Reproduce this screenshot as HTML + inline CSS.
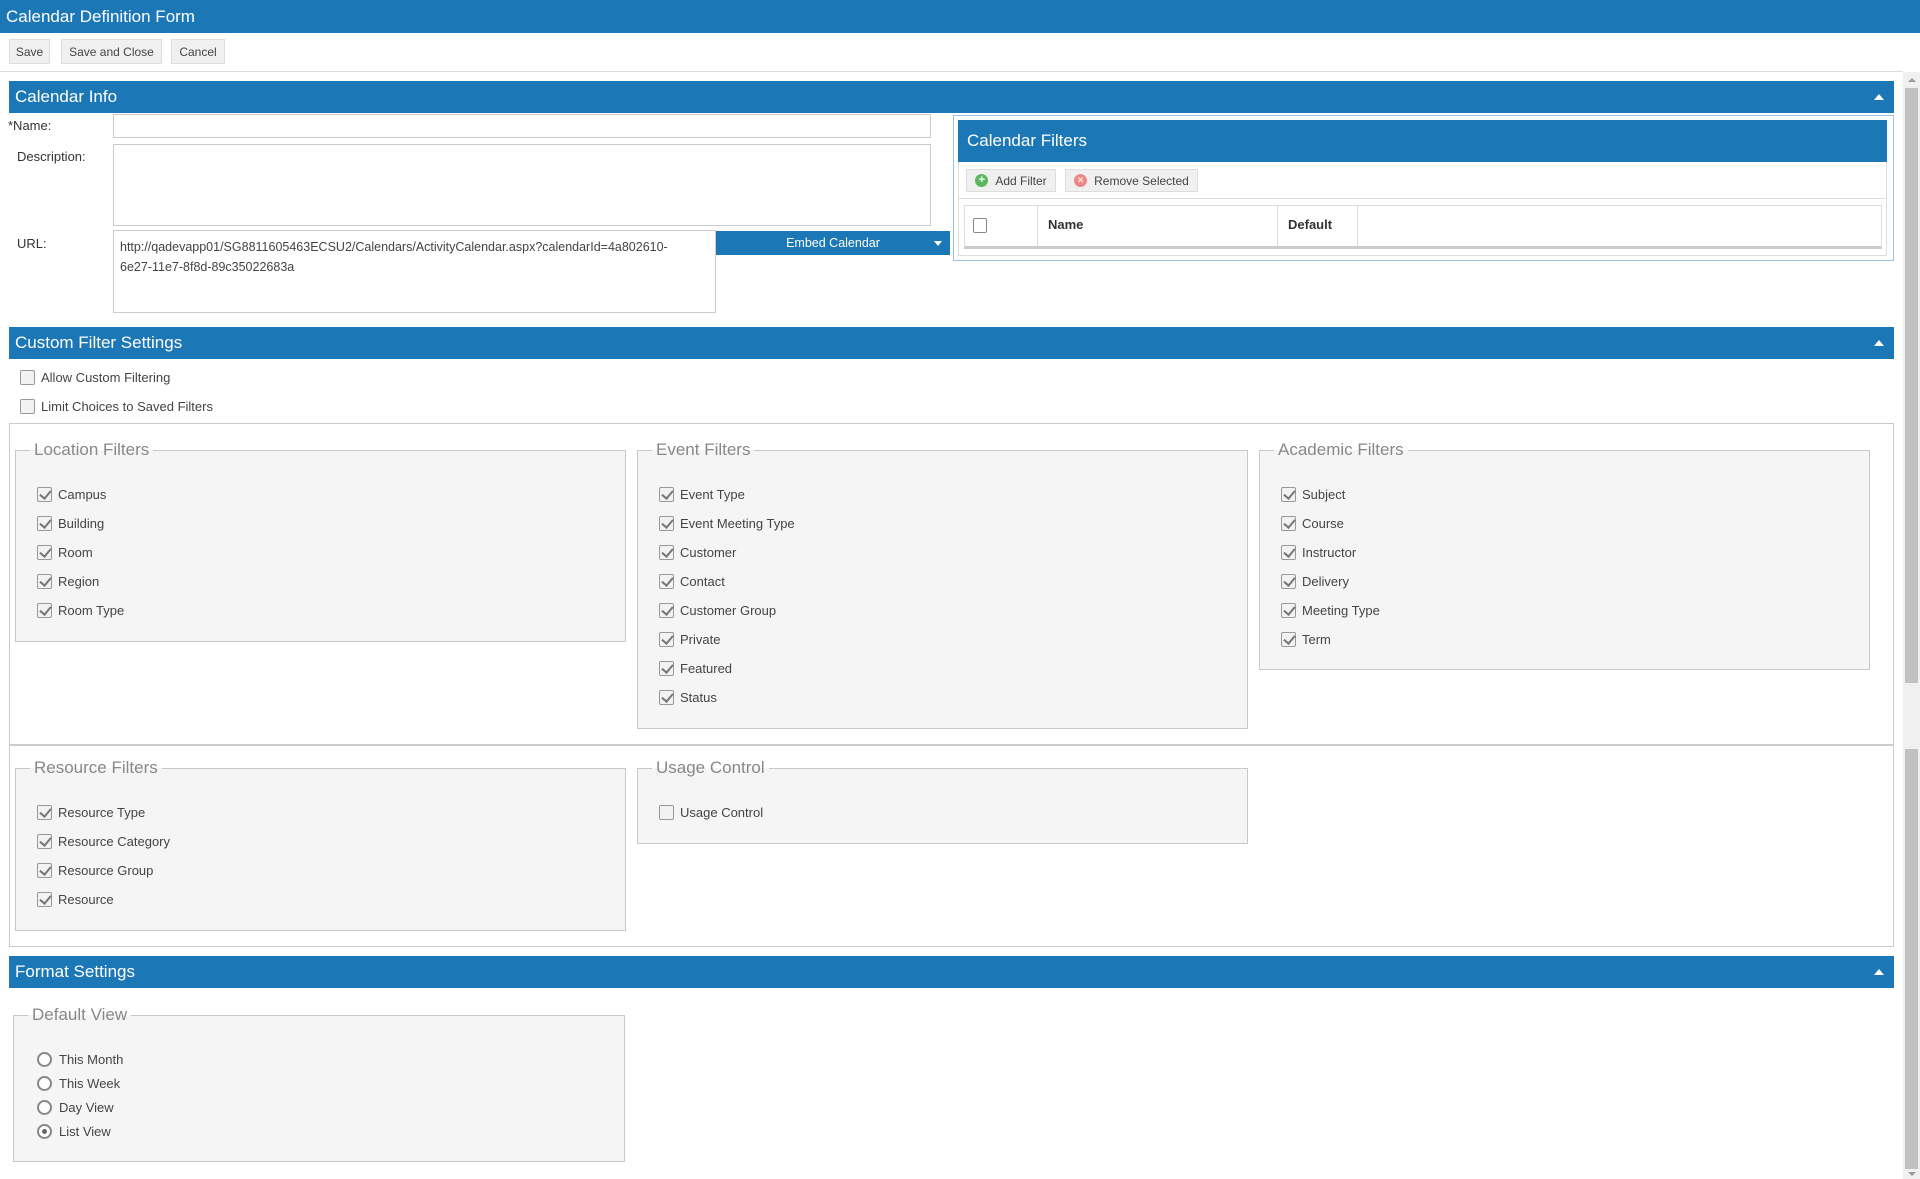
<!DOCTYPE html>
<html><head><meta charset="utf-8"><style>
*{box-sizing:border-box;margin:0;padding:0}
body{width:1920px;height:1179px;overflow:hidden;background:#fff;font-family:"Liberation Sans",sans-serif;font-size:13px;color:#333;position:relative}
.a{position:absolute}
.bar{position:absolute;background:#1c77b7;color:#fff;font-size:17px;padding-left:6px;display:flex;align-items:center}
.tri{position:absolute;right:10px;top:50%;margin-top:-3px;width:0;height:0;border-left:5px solid transparent;border-right:5px solid transparent;border-bottom:6px solid #fff}
.btn{position:absolute;background:#f0f0f0;border:1px solid #ddd;font-size:12px;color:#444;display:flex;align-items:center;justify-content:center}
.inp{position:absolute;border:1px solid #ccc;background:#fff}
.fs{position:absolute;background:#f5f5f5;border:1px solid #c8c8c8}
.lg{position:absolute;top:-12px;left:14px;background:#fff;padding:0 4px;color:#888;font-size:17px;line-height:22px;background:linear-gradient(#fff 50%,#f5f5f5 50%)}
.it{position:absolute;left:21px;height:18px;display:flex;align-items:center;font-size:13px;color:#444}
.cb{width:15px;height:15px;border:1px solid #999;border-radius:2px;background:#f2f2f2;margin-right:6px;position:relative;flex:none}
.cb.k::after{content:"";position:absolute;left:4px;top:0px;width:5px;height:9px;border-right:2.5px solid #777;border-bottom:2.5px solid #777;transform:rotate(40deg)}
.rd{width:15px;height:15px;border:2px solid #888;border-radius:50%;margin-right:7px;position:relative;flex:none;background:#fff}
.rd.k::after{content:"";position:absolute;left:3px;top:3px;width:5px;height:5px;border-radius:50%;background:#666}
</style></head><body>
<div class="bar" style="left:0;top:0;width:1920px;height:33px">Calendar Definition Form</div>
<div class="btn" style="left:9px;top:39px;width:41px;height:25px">Save</div>
<div class="btn" style="left:61px;top:39px;width:101px;height:25px">Save and Close</div>
<div class="btn" style="left:171px;top:39px;width:54px;height:25px">Cancel</div>
<div class="a" style="left:0;top:71px;width:1903px;height:1px;background:#ddd"></div>
<!-- scrollbar -->
<div class="a" style="left:1903px;top:72px;width:17px;height:1107px;background:#f0f0f0"></div>
<div class="a" style="left:1905px;top:88px;width:13px;height:595px;background:#c1c1c1"></div>
<div class="a" style="left:1905px;top:749px;width:13px;height:420px;background:#c1c1c1"></div>
<div class="a" style="left:1908px;top:78px;border-left:4px solid transparent;border-right:4px solid transparent;border-bottom:4px solid #999"></div>
<div class="a" style="left:1908px;top:1172px;border-left:4px solid transparent;border-right:4px solid transparent;border-top:4px solid #999"></div>

<div class="bar" style="left:9px;top:81px;width:1885px;height:32px">Calendar Info<span class="tri"></span></div>
<div class="a" style="left:8px;top:118px">*Name:</div>
<div class="inp" style="left:113px;top:114px;width:818px;height:24px"></div>
<div class="a" style="left:17px;top:149px">Description:</div>
<div class="inp" style="left:113px;top:144px;width:818px;height:82px"></div>
<div class="a" style="left:17px;top:236px">URL:</div>
<div class="inp" style="left:113px;top:230px;width:603px;height:83px;padding:6px 0 0 6px;font-size:12.5px;line-height:20px;color:#444">http://qadevapp01/SG8811605463ECSU2/Calendars/ActivityCalendar.aspx?calendarId=4a802610-<br>6e27-11e7-8f8d-89c35022683a</div>
<div class="a" style="left:716px;top:231px;width:234px;height:24px;background:#1c77b7;color:#fff;font-size:12.5px;display:flex;align-items:center;justify-content:center">Embed Calendar<span class="a" style="right:8px;top:10px;border-left:4px solid transparent;border-right:4px solid transparent;border-top:5px solid #fff"></span></div>

<div class="a" style="left:953px;top:115px;width:941px;height:146px;border:1px solid #9cc3e6"></div>
<div class="bar" style="left:958px;top:120px;width:929px;height:42px;padding-left:9px">Calendar Filters</div>
<div class="a" style="left:958px;top:162px;width:929px;height:94px;border:1px solid #ddd;border-top:none"></div>
<div class="a" style="left:958px;top:198px;width:929px;height:1px;background:#ddd"></div>
<div class="btn" style="left:966px;top:169px;width:90px;height:23px"><span style="display:inline-block;width:13px;height:13px;border-radius:50%;background:#5cb85c;color:#fff;font-size:11px;line-height:13px;text-align:center;margin-right:7px;font-weight:bold">+</span>Add Filter</div>
<div class="btn" style="left:1065px;top:169px;width:133px;height:23px"><span style="display:inline-block;width:13px;height:13px;border-radius:50%;background:#e88;color:#fff;font-size:9px;line-height:13px;text-align:center;margin-right:7px">✕</span>Remove Selected</div>
<div class="a" style="left:964px;top:205px;width:918px;height:44px;border:1px solid #ddd;border-bottom:3px solid #ccc"></div>
<div class="a" style="left:1037px;top:206px;width:1px;height:40px;background:#ddd"></div>
<div class="a" style="left:1277px;top:206px;width:1px;height:40px;background:#ddd"></div>
<div class="a" style="left:1357px;top:206px;width:1px;height:40px;background:#ddd"></div>
<div class="a" style="left:973px;top:218px;width:14px;height:15px;border:1px solid #888;border-radius:2px"></div>
<div class="a" style="left:1048px;top:217px;font-weight:bold;color:#333">Name</div>
<div class="a" style="left:1288px;top:217px;font-weight:bold;color:#333">Default</div>

<div class="bar" style="left:9px;top:327px;width:1885px;height:32px">Custom Filter Settings<span class="tri"></span></div>
<div class="it" style="left:20px;top:368px"><span class="cb"></span>Allow Custom Filtering</div>
<div class="it" style="left:20px;top:397px"><span class="cb"></span>Limit Choices to Saved Filters</div>
<div class="a" style="left:9px;top:423px;width:1885px;height:323px;border:1px solid #ccc;border-bottom:2px solid #ccc"></div>
<div class="a" style="left:9px;top:745px;width:1885px;height:202px;border:1px solid #ccc;border-top:none"></div>

<div class="fs" style="left:15px;top:450px;width:611px;height:192px"><span class="lg">Location Filters</span>
<div class="it" style="top:34px"><span class="cb k"></span>Campus</div>
<div class="it" style="top:63px"><span class="cb k"></span>Building</div>
<div class="it" style="top:92px"><span class="cb k"></span>Room</div>
<div class="it" style="top:121px"><span class="cb k"></span>Region</div>
<div class="it" style="top:150px"><span class="cb k"></span>Room Type</div>
</div>
<div class="fs" style="left:637px;top:450px;width:611px;height:279px"><span class="lg">Event Filters</span>
<div class="it" style="top:34px"><span class="cb k"></span>Event Type</div>
<div class="it" style="top:63px"><span class="cb k"></span>Event Meeting Type</div>
<div class="it" style="top:92px"><span class="cb k"></span>Customer</div>
<div class="it" style="top:121px"><span class="cb k"></span>Contact</div>
<div class="it" style="top:150px"><span class="cb k"></span>Customer Group</div>
<div class="it" style="top:179px"><span class="cb k"></span>Private</div>
<div class="it" style="top:208px"><span class="cb k"></span>Featured</div>
<div class="it" style="top:237px"><span class="cb k"></span>Status</div>
</div>
<div class="fs" style="left:1259px;top:450px;width:611px;height:220px"><span class="lg">Academic Filters</span>
<div class="it" style="top:34px"><span class="cb k"></span>Subject</div>
<div class="it" style="top:63px"><span class="cb k"></span>Course</div>
<div class="it" style="top:92px"><span class="cb k"></span>Instructor</div>
<div class="it" style="top:121px"><span class="cb k"></span>Delivery</div>
<div class="it" style="top:150px"><span class="cb k"></span>Meeting Type</div>
<div class="it" style="top:179px"><span class="cb k"></span>Term</div>
</div>
<div class="fs" style="left:15px;top:768px;width:611px;height:163px"><span class="lg">Resource Filters</span>
<div class="it" style="top:34px"><span class="cb k"></span>Resource Type</div>
<div class="it" style="top:63px"><span class="cb k"></span>Resource Category</div>
<div class="it" style="top:92px"><span class="cb k"></span>Resource Group</div>
<div class="it" style="top:121px"><span class="cb k"></span>Resource</div>
</div>
<div class="fs" style="left:637px;top:768px;width:611px;height:76px"><span class="lg">Usage Control</span>
<div class="it" style="top:34px"><span class="cb"></span>Usage Control</div>
</div>

<div class="bar" style="left:9px;top:956px;width:1885px;height:32px">Format Settings<span class="tri"></span></div>
<div class="fs" style="left:13px;top:1015px;width:612px;height:147px"><span class="lg">Default View</span>
<div class="it" style="top:34px;left:23px"><span class="rd"></span>This Month</div>
<div class="it" style="top:58px;left:23px"><span class="rd"></span>This Week</div>
<div class="it" style="top:82px;left:23px"><span class="rd"></span>Day View</div>
<div class="it" style="top:106px;left:23px"><span class="rd k"></span>List View</div>
</div>
</body></html>
